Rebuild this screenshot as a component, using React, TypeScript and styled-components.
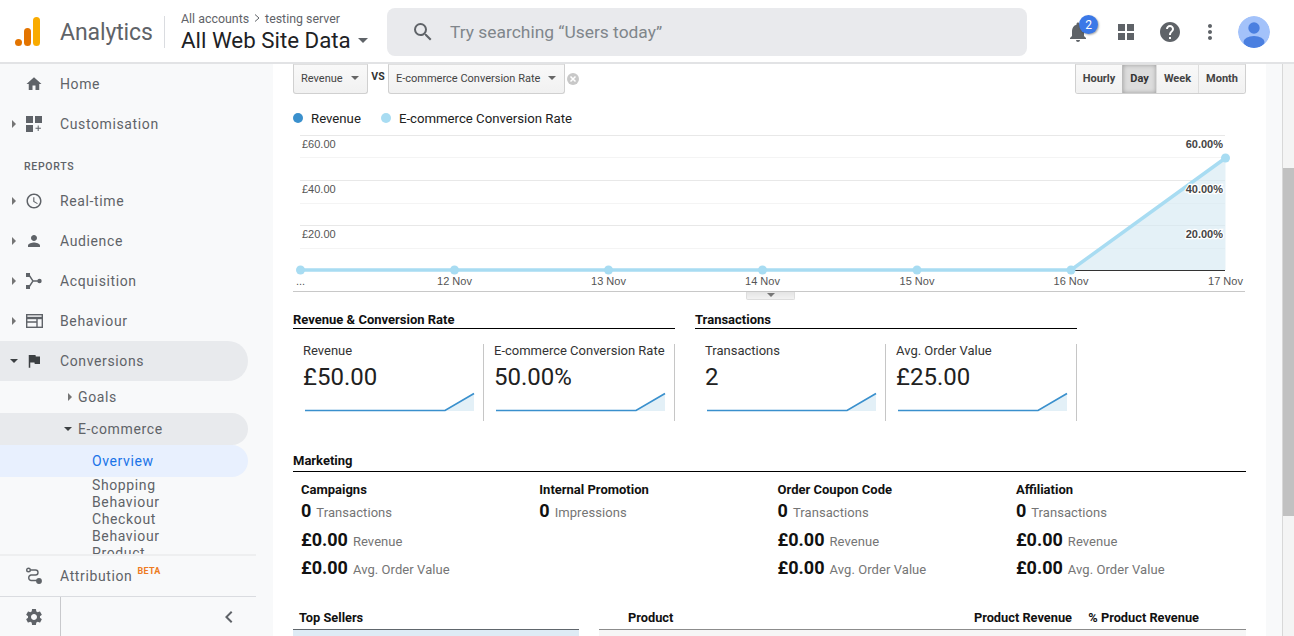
import React from "react";
import styled, { createGlobalStyle } from "styled-components";
import { MdHome, MdPerson, MdFlag, MdSettings, MdChevronLeft, MdNotifications, MdHelp, MdMoreVert, MdSearch, MdAccessTime, MdArrowDropDown } from "react-icons/md";

const Global = createGlobalStyle`
  html, body { margin: 0; padding: 0; height: 636px; overflow: hidden; background: #fff; }
  body { font-family: Roboto, "Liberation Sans", sans-serif; color: #212121; }
  * { box-sizing: border-box; }
`;

const Page = styled.div`display:flex;flex-direction:column;width:1294px;height:636px;overflow:hidden;`;
const Header = styled.header`display:flex;align-items:center;height:64px;flex:none;background:#fff;border-bottom:2px solid #e2e3e5;padding-top:2px;`;
const Logo = styled.svg`width:28px;height:32px;margin-left:15px;flex:none;margin-top:-3px;`;
const Product = styled.div`margin-left:17px;width:88px;font-size:23px;color:#5f6368;letter-spacing:-.1px;flex:none;margin-top:1px;`;
const HeaderRule = styled.div`width:1px;height:32px;background:#dadce0;margin:0 16px;flex:none;`;
const Account = styled.div`width:190px;flex:none;`;
const Crumb = styled.div`display:flex;align-items:center;gap:3px;font-size:12.4px;color:#5f6368;line-height:15px;`;
const ViewName = styled.div`display:flex;align-items:center;font-size:22.3px;line-height:28px;color:#202124;white-space:nowrap;svg{flex:none;}`;
const SearchBox = styled.div`display:flex;align-items:center;width:640px;height:48px;margin-left:16px;border-radius:8px;background:#e9eaed;color:#5f6368;flex:none;font-size:17.4px;padding-left:24px;`;
const SearchText = styled.span`margin-left:15px;color:#80868b;`;
const HeaderIcons = styled.div`display:flex;align-items:center;margin-left:39px;color:#5f6368;`;
const IconSlot = styled.div<{ $ml?: number }>`position:relative;width:24px;height:24px;margin-left:${p => p.$ml ?? 0}px;display:flex;align-items:center;justify-content:center;flex:none;`;
const Badge = styled.span`position:absolute;left:13px;top:-5px;width:19px;height:19px;border-radius:50%;background:#3b78e7;color:#fff;font-size:12px;display:flex;align-items:center;justify-content:center;box-shadow:1px 1px 2px rgba(0,0,0,.35);`;
const Avatar = styled.div`width:32px;height:32px;border-radius:50%;overflow:hidden;margin-left:16px;flex:none;`;

const Body = styled.div`display:flex;flex:1;min-height:0;`;
const Sidebar = styled.nav`display:flex;flex-direction:column;width:273px;flex:none;background:#f8f9fa;`;
const NavScroll = styled.div`height:490px;overflow:hidden;flex:none;`;
const NavRow = styled.div<{ $active?: boolean; $wide?: boolean }>`display:flex;align-items:center;height:40px;width:${p => (p.$wide ? 256 : 248)}px;font-size:14px;font-weight:400;letter-spacing:.62px;color:#5f6368;border-radius:0 20px 20px 0;background:${p => (p.$active ? "#e8eaed" : "transparent")};`;
const Caret = styled.span<{ $open?: boolean }>`width:0;height:0;flex:none;margin-left:${p => (p.$open ? "10px" : "12px")};margin-right:${p => (p.$open ? "7px" : "9px")};${p => p.$open
  ? "border-left:4.5px solid transparent;border-right:4.5px solid transparent;border-top:4.5px solid #3c4043;"
  : "border-top:4.5px solid transparent;border-bottom:4.5px solid transparent;border-left:4.5px solid #757575;"}`;
const NoCaret = styled.span`width:25px;flex:none;`;
const NavIcon = styled.span`width:18px;height:18px;margin-right:17px;display:flex;align-items:center;justify-content:center;flex:none;color:#5f6368;`;
const ReportsLabel = styled.div`height:37px;padding:16px 0 0 24px;font-size:10.5px;font-weight:500;letter-spacing:.7px;color:#5f6368;line-height:14px;`;
const Goal = styled.div`display:flex;align-items:center;height:32px;padding-left:66px;font-size:14px;letter-spacing:.62px;color:#5f6368;`;
const SubRow = styled.div<{ $active?: boolean }>`display:flex;align-items:center;height:32px;width:248px;padding-left:64px;font-size:14px;letter-spacing:.62px;color:#5f6368;border-radius:0 16px 16px 0;background:${p => (p.$active ? "#e8eaed" : "transparent")};`;
const SubCaret = styled.span<{ $open?: boolean }>`width:0;height:0;margin-right:6px;${p => p.$open
  ? "border-left:4px solid transparent;border-right:4px solid transparent;border-top:4px solid #3c4043;"
  : "border-top:4px solid transparent;border-bottom:4px solid transparent;border-left:4px solid #757575;margin-left:2px;"}`;
const LeafActive = styled.div`display:flex;align-items:center;height:32px;width:248px;padding-left:92px;font-size:14px;letter-spacing:.62px;color:#1a73e8;background:#e8f0fe;border-radius:0 16px 16px 0;`;
const LeafList = styled.div`padding:0 0 0 92px;`;
const Leaf = styled.div`width:90px;font-size:14px;letter-spacing:.62px;line-height:17px;color:#5f6368;`;
const NavBottom = styled.div`flex:none;width:256px;border-top:2px solid #eeeff0;`;
const BetaTag = styled.sup`color:#ee7b22;font-size:9px;font-weight:700;letter-spacing:.3px;margin-left:5px;position:relative;top:-5px;line-height:0;vertical-align:baseline;`;
const NavFooter = styled.div`display:flex;height:41px;border-top:1px solid #dadce0;`;
const GearCell = styled.div`width:61px;display:flex;align-items:center;justify-content:center;border-right:1px solid #c8c9cc;color:#5f6368;padding-left:7px;`;
const CollapseCell = styled.div`flex:1;display:flex;align-items:center;justify-content:flex-end;padding-right:15px;color:#5f6368;`;

const Main = styled.main`width:993px;flex:none;overflow:hidden;padding:0 20px;background:#fff;`;
const Toolbar = styled.div`display:flex;align-items:flex-start;height:30px;`;
const SelectButton = styled.div<{ $w: number }>`display:flex;align-items:center;justify-content:space-between;width:${p => p.$w}px;height:30px;padding:0 7px 2px;border:1px solid #d0d0d0;border-top-color:#e0e0e0;border-radius:0 0 3px 3px;background:linear-gradient(#f9f9f9,#f1f1f1);font-family:Roboto,sans-serif;font-size:11px;color:#444;white-space:nowrap;`;
const TinyArrow = styled.span`width:0;height:0;border-left:4px solid transparent;border-right:4px solid transparent;border-top:4px solid #666;margin-right:1px;`;
const Vs = styled.span`width:20px;text-align:center;font:700 10.5px/26px Roboto,sans-serif;color:#333;`;
const CloseDot = styled.span`display:flex;margin:8px 0 0 1px;`;
const Spacer = styled.div`flex:1;`;
const Intervals = styled.div`display:flex;height:30px;border:1px solid #d0d0d0;border-top-color:#e0e0e0;border-radius:0 0 3px 3px;overflow:hidden;`;
const Interval = styled.div<{ $on?: boolean; $w: number }>`display:flex;align-items:center;justify-content:center;padding-bottom:2px;width:${p => p.$w}px;font:700 11px Roboto,sans-serif;color:#444;border-left:1px solid ${p => (p.$on ? "#bbb" : "#ddd")};&:first-child{border-left:0;}background:${p => (p.$on ? "#dcdcdc" : "linear-gradient(#f9f9f9,#f1f1f1)")};${p => p.$on ? "box-shadow:inset 0 0 4px rgba(0,0,0,.3);color:#333;" : ""}`;
const Legend = styled.div`display:flex;align-items:center;height:41px;font:13.2px Roboto,sans-serif;color:#212121;padding-top:7px;`;
const LegendItem = styled.span<{ $c: string }>`display:flex;align-items:center;margin-right:20px;&::before{content:"";width:10px;height:10px;border-radius:50%;background:${p => p.$c};margin-right:8px;}`;
const ChartSvg = styled.svg`display:block;width:953px;height:157px;`;
const ChartTab = styled.div`width:49px;height:8px;margin:0 0 0 453px;background:linear-gradient(#e4e4e4,#f2f2f2);border:1px solid #ddd;border-top:0;border-radius:0 0 2px 2px;display:flex;justify-content:center;padding-top:1px;`;
const TabArrow = styled.span`width:0;height:0;border-left:4px solid transparent;border-right:4px solid transparent;border-top:4px solid #777;`;
const SummaryRow = styled.div`display:flex;gap:20px;margin-top:12px;`;
const Section = styled.section`width:382px;`;
const SectionTitle = styled.h3`margin:0;height:17px;font-size:13px;line-height:16px;font-weight:700;color:#111;border-bottom:1px solid #000;`;
const CardRow = styled.div`display:grid;grid-template-columns:191px 191px;margin-top:15px;`;
const Card = styled.div`height:77px;padding:0 0 0 10px;border-right:1px solid #c6c6c6;`;
const CardLabel = styled.div`font-size:13px;line-height:14px;color:#333;white-space:nowrap;`;
const CardValue = styled.div`font-size:24px;line-height:28px;margin-top:5px;color:#212121;`;
const Spark = styled.svg`display:block;width:170px;height:20px;margin:1px 0 0 2px;`;
const MarketingTitle = styled(SectionTitle)`margin-top:32px;height:19px;`;
const MarketingGrid = styled.div`display:grid;grid-template-columns:repeat(4,238.3px);padding:11px 0 0 8px;height:125px;`;
const MColumn = styled.div``;
const MTitle = styled.div`font-size:13px;font-weight:700;line-height:14px;color:#111;white-space:nowrap;`;
const MRow = styled.div`display:flex;align-items:baseline;height:28.5px;line-height:28.5px;`;
const MBig = styled.span`font-size:18px;font-weight:700;color:#111;margin-right:5px;`;
const MSmall = styled.span`font-size:13px;color:#757575;letter-spacing:.07px;`;
const TableRow = styled.div`display:flex;gap:20px;margin-top:12px;`;
const TopSellers = styled.div`width:286px;`;
const ProductTable = styled.div`width:647px;`;
const THead = styled.div<{ $dark?: boolean }>`display:flex;height:21px;padding-top:1px;font-size:12.8px;font-weight:700;line-height:16px;color:#111;border-bottom:1px solid ${p => (p.$dark ? "#60666c" : "#8c8c8c")};white-space:nowrap;`;
const THCell = styled.span<{ $w: number; $pad?: number; $right?: boolean }>`width:${p => p.$w}px;padding-left:${p => p.$pad ?? 0}px;text-align:${p => (p.$right ? "right" : "left")};`;
const TBodyTint = styled.div<{ $c: string }>`height:40px;background:${p => p.$c};`;
const RightStrip = styled.div`width:16px;flex:none;background:#f8f9fa;`;
const ScrollTrack = styled.div`width:12px;flex:none;background:#f4f4f4;border-left:1px solid #d8d8d8;padding-top:104px;`;
const ScrollThumb = styled.div`height:348px;background:#c1c1c1;`;

function Sparkline() {
  return (
    <Spark viewBox="0 0 170 20">
      <path d="M140 18L169 2V19H140Z" fill="#e3f0f7" />
      <path d="M0 18.5H140L169 1.5" fill="none" stroke="#3a90cd" strokeWidth="1.7" />
    </Spark>
  );
}

const pts = [7.5, 161.5, 315.5, 469.5, 624, 778, 932.5];
const dates = ["...", "12 Nov", "13 Nov", "14 Nov", "15 Nov", "16 Nov", "17 Nov"];

function Chart() {
  const lines = [0.5, 22.5, 45.5, 68.5, 90.5, 113.5];
  const lineD = "M7.5 135H778L932.5 23";
  return (
    <ChartSvg viewBox="0 0 953 157">
      {lines.map((y, i) => (
        <line key={y} x1="7" x2="932" y1={y} y2={y} stroke={i % 2 ? "#f4f4f4" : "#e8e8e8"} />
      ))}
      <path d="M778 135L932.5 23V135Z" fill="#d6e9f3" fillOpacity=".65" />
      <line x1="778" x2="932" y1="135.5" y2="135.5" stroke="#333" />
      <path d={lineD} fill="none" stroke="#a8dcf2" strokeWidth="3.5" />
      {pts.map((x, i) => (
        <circle key={x} cx={x} cy={i === 6 ? 23 : 135} r="4.5" fill="#a8dcf2" />
      ))}
      <g fontFamily='"Liberation Sans",Arial,sans-serif' fontSize="11" fill="#555">
        <text x="9" y="13">£60.00</text>
        <text x="9" y="58">£40.00</text>
        <text x="9" y="103">£20.00</text>
      </g>
      <g fontFamily='"Liberation Sans",Arial,sans-serif' fontSize="11" fontWeight="700" fill="#444" textAnchor="end" stroke="#fff" strokeWidth="2.5" paintOrder="stroke">
        <text x="930" y="13">60.00%</text>
        <text x="930" y="58">40.00%</text>
        <text x="930" y="103">20.00%</text>
      </g>
      <g fontFamily='"Liberation Sans",Arial,sans-serif' fontSize="11" fill="#555" textAnchor="middle">
        {dates.map((d, i) => (
          <text key={d} x={pts[i]} y="150">{d}</text>
        ))}
      </g>
      <line x1="0" x2="952" y1="156.5" y2="156.5" stroke="#c8c8c8" />
    </ChartSvg>
  );
}

const marketing = [
  { t: "Campaigns", c: "Transactions", money: true },
  { t: "Internal Promotion", c: "Impressions", money: false },
  { t: "Order Coupon Code", c: "Transactions", money: true },
  { t: "Affiliation", c: "Transactions", money: true },
];

export default function App() {
  return (
    <Page>
      <Global />
      <Header>
        <Logo viewBox="0 0 28 32">
          <rect x="18" y="2" width="7" height="29" rx="3.5" fill="#f9ab00" />
          <rect x="9" y="13" width="7" height="18" rx="3.5" fill="#e37400" />
          <circle cx="3.5" cy="27.5" r="3.5" fill="#e37400" />
        </Logo>
        <Product>Analytics</Product>
        <HeaderRule />
        <Account>
          <Crumb>All accounts
            <svg width="10" height="10" viewBox="0 0 10 10"><path d="M3 1.5L7 5L3 8.5" fill="none" stroke="#5f6368" /></svg>
            testing server</Crumb>
          <ViewName>All Web Site Data<MdArrowDropDown size={24} color="#5f6368" /></ViewName>
        </Account>
        <SearchBox>
          <MdSearch size={24} />
          <SearchText>Try searching “Users today”</SearchText>
        </SearchBox>
        <HeaderIcons>
          <IconSlot>
            <MdNotifications size={24} />
            <Badge>2</Badge>
          </IconSlot>
          <IconSlot $ml={24}>
            <svg width="16" height="16" viewBox="0 0 16 16" fill="#5f6368"><rect width="7" height="7" /><rect x="9" width="7" height="7" /><rect y="9" width="7" height="7" /><rect x="9" y="9" width="7" height="7" /></svg>
          </IconSlot>
          <IconSlot $ml={20}><MdHelp size={24} /></IconSlot>
          <IconSlot $ml={16}><MdMoreVert size={24} /></IconSlot>
          <Avatar>
            <svg width="32" height="32" viewBox="0 0 32 32">
              <circle cx="16" cy="16" r="16" fill="#a3c2fa" />
              <circle cx="16" cy="12" r="5.7" fill="#4a7fe0" />
              <ellipse cx="16" cy="26" rx="10.5" ry="6" fill="#4a7fe0" />
            </svg>
          </Avatar>
        </HeaderIcons>
      </Header>
      <Body>
        <Sidebar>
          <NavScroll>
            <NavRow><NoCaret /><NavIcon><MdHome size={20} /></NavIcon>Home</NavRow>
            <NavRow><Caret /><NavIcon>
              <svg width="16" height="16" viewBox="0 0 16 16" fill="#5f6368"><rect width="7" height="7" /><rect x="9" width="7" height="7" /><rect y="9" width="7" height="7" /><path d="M11.7 9.5h1v2.2h2.2v1h-2.2v2.2h-1v-2.2H9.5v-1h2.2z" /></svg>
            </NavIcon>Customisation</NavRow>
            <ReportsLabel>REPORTS</ReportsLabel>
            <NavRow><Caret /><NavIcon><MdAccessTime size={20} /></NavIcon>Real-time</NavRow>
            <NavRow><Caret /><NavIcon><MdPerson size={20} /></NavIcon>Audience</NavRow>
            <NavRow><Caret /><NavIcon>
              <svg width="16" height="16" viewBox="0 0 16 16" fill="#5f6368"><rect x="0" y="0" width="4" height="4" /><rect x="0" y="12" width="4" height="4" /><circle cx="13.5" cy="8" r="2.2" /><path d="M3 2L7 8L3 14M7 8H13" fill="none" stroke="#5f6368" strokeWidth="1.4" /></svg>
            </NavIcon>Acquisition</NavRow>
            <NavRow><Caret /><NavIcon>
              <svg width="17" height="14" viewBox="0 0 17 14" fill="none" stroke="#5f6368" strokeWidth="1.4"><rect x=".7" y=".7" width="15.6" height="12.6" /><path d="M.7 4H16.3" strokeWidth="2.4" /><path d="M.7 8H11M11 4V13" /></svg>
            </NavIcon>Behaviour</NavRow>
            <NavRow $active><Caret $open /><NavIcon><MdFlag size={20} color="#3c4043" /></NavIcon>Conversions</NavRow>
            <Goal><SubCaret />Goals</Goal>
            <SubRow $active><SubCaret $open />E-commerce</SubRow>
            <LeafActive>Overview</LeafActive>
            <LeafList>
              <Leaf>Shopping Behaviour</Leaf>
              <Leaf>Checkout Behaviour</Leaf>
              <Leaf>Product</Leaf>
            </LeafList>
          </NavScroll>
          <NavBottom>
            <NavRow $wide><NoCaret /><NavIcon>
              <svg width="18" height="18" viewBox="0 0 18 18" fill="none" stroke="#5f6368" strokeWidth="1.4"><circle cx="3.5" cy="3" r="1.8" /><path d="M5.5 3H10.5A2.5 2.5 0 0 1 10.5 8H6A2.8 2.8 0 0 0 6 13.5H12.5" /><circle cx="14" cy="14" r="2.2" fill="#5f6368" /></svg>
            </NavIcon>Attribution<BetaTag>BETA</BetaTag></NavRow>
            <NavFooter>
              <GearCell><MdSettings size={20} /></GearCell>
              <CollapseCell><MdChevronLeft size={24} /></CollapseCell>
            </NavFooter>
          </NavBottom>
        </Sidebar>
        <Main>
          <Toolbar>
            <SelectButton $w={75}>Revenue<TinyArrow /></SelectButton>
            <Vs>VS</Vs>
            <SelectButton $w={177}>E-commerce Conversion Rate<TinyArrow /></SelectButton>
            <CloseDot>
              <svg width="14" height="14" viewBox="0 0 14 14"><circle cx="7" cy="7" r="6" fill="#c8c8c8" /><path d="M4.5 4.5L9.5 9.5M9.5 4.5L4.5 9.5" stroke="#fff" strokeWidth="1.5" /></svg>
            </CloseDot>
            <Spacer />
            <Intervals>
              <Interval $w={46}>Hourly</Interval>
              <Interval $w={34} $on>Day</Interval>
              <Interval $w={42}>Week</Interval>
              <Interval $w={47}>Month</Interval>
            </Intervals>
          </Toolbar>
          <Legend>
            <LegendItem $c="#3a90cd">Revenue</LegendItem>
            <LegendItem $c="#a8dcf2">E-commerce Conversion Rate</LegendItem>
          </Legend>
          <Chart />
          <ChartTab><TabArrow /></ChartTab>
          <SummaryRow>
            <Section>
              <SectionTitle>Revenue &amp; Conversion Rate</SectionTitle>
              <CardRow>
                <Card><CardLabel>Revenue</CardLabel><CardValue>£50.00</CardValue><Sparkline /></Card>
                <Card><CardLabel>E-commerce Conversion Rate</CardLabel><CardValue>50.00%</CardValue><Sparkline /></Card>
              </CardRow>
            </Section>
            <Section>
              <SectionTitle>Transactions</SectionTitle>
              <CardRow>
                <Card><CardLabel>Transactions</CardLabel><CardValue>2</CardValue><Sparkline /></Card>
                <Card><CardLabel>Avg. Order Value</CardLabel><CardValue>£25.00</CardValue><Sparkline /></Card>
              </CardRow>
            </Section>
          </SummaryRow>
          <MarketingTitle>Marketing</MarketingTitle>
          <MarketingGrid>
            {marketing.map(m => (
              <MColumn key={m.t}>
                <MTitle>{m.t}</MTitle>
                <MRow><MBig>0</MBig><MSmall>{m.c}</MSmall></MRow>
                {m.money && <MRow><MBig>£0.00</MBig><MSmall>Revenue</MSmall></MRow>}
                {m.money && <MRow><MBig>£0.00</MBig><MSmall>Avg. Order Value</MSmall></MRow>}
              </MColumn>
            ))}
          </MarketingGrid>
          <TableRow>
            <TopSellers>
              <THead $dark><THCell $w={286} $pad={6}>Top Sellers</THCell></THead>
              <TBodyTint $c="#deebf5" />
            </TopSellers>
            <ProductTable>
              <THead>
                <THCell $w={140} $pad={29}>Product</THCell>
                <THCell $w={333} $right>Product Revenue</THCell>
                <THCell $w={127} $right>% Product Revenue</THCell>
              </THead>
              <TBodyTint $c="#f6f6f6" />
            </ProductTable>
          </TableRow>
        </Main>
        <RightStrip />
        <ScrollTrack><ScrollThumb /></ScrollTrack>
      </Body>
    </Page>
  );
}
